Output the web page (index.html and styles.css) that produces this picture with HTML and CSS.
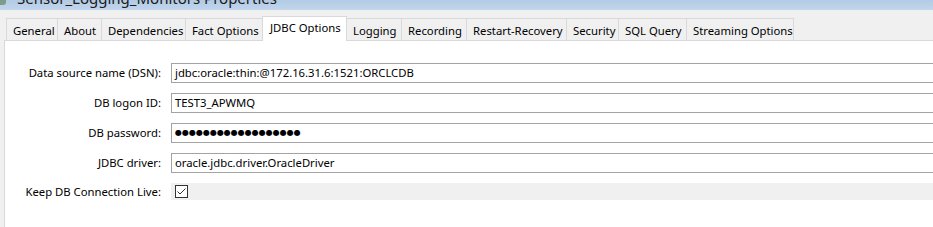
FILE: index.html
```html
<!DOCTYPE html>
<html>
<head>
<meta charset="utf-8">
<link rel="stylesheet" href="styles.css">
</head>
<body>
<div class="titlebar">
  <span class="ticon"></span>
  <span class="ttext">Sensor_Logging_Monitors Properties</span>
</div>
<div class="tabs">
  <div class="tab t1">General</div>
  <div class="tab t2">About</div>
  <div class="tab t3">Dependencies</div>
  <div class="tab t4">Fact Options</div>
  <div class="tab t5 sel">JDBC Options</div>
  <div class="tab t6">Logging</div>
  <div class="tab t7">Recording</div>
  <div class="tab t8">Restart-Recovery</div>
  <div class="tab t9">Security</div>
  <div class="tab t10">SQL Query</div>
  <div class="tab t11">Streaming Options</div>
</div>
<div class="panel">
  <div class="form">
    <div class="lbl">Data source name (DSN):</div>
    <div class="field">jdbc:oracle:thin:@172.16.31.6:1521:ORCLCDB</div>
    <div class="lbl">DB logon ID:</div>
    <div class="field">TEST3_APWMQ</div>
    <div class="lbl">DB password:</div>
    <div class="field"><span class="dots">●●●●●●●●●●●●●●●●●●</span></div>
    <div class="lbl">JDBC driver:</div>
    <div class="field">oracle.jdbc.driver.OracleDriver</div>
    <div class="lbl lbl-sm">Keep DB Connection Live:</div>
    <div class="band">
      <span class="check">
        <svg width="11" height="11" viewBox="0 0 11 11"><path d="M1.5 5.5 L4 8 L9.5 2.5" fill="none" stroke="#333" stroke-width="1"/></svg>
      </span>
    </div>
  </div>
</div>
</body>
</html>
```

FILE: styles.css
```css
html, body {
  margin: 0;
  padding: 0;
  overflow: hidden;
}
body {
  width: 933px;
  height: 227px;
  background: #f0f0f0;
  font-family: "Noto Sans", "Open Sans", sans-serif;
  font-size: 11.3px;
  color: #000;
}
.titlebar {
  height: 10px;
  overflow: hidden;
  background: linear-gradient(#b2cae5, #c2d6ec);
  display: flex;
  align-items: flex-start;
}
.ticon {
  width: 6px;
  height: 5px;
  background: #7f9a86;
  border-radius: 0 0 3px 0;
  flex: none;
}
.ttext {
  margin-left: 11px;
  margin-top: -11px;
  font-size: 15px;
  line-height: 18px;
  color: #1a1a1a;
  white-space: nowrap;
}
.tabs {
  display: flex;
  align-items: flex-end;
  height: 24px;
  margin-top: 6px;
  padding-left: 6px;
}
.tab {
  box-sizing: border-box;
  height: 22px;
  border: 1px solid #d9d9d9;
  border-bottom: none;
  margin-left: -1px;
  background: #f0f0f0;
  padding-left: 6px;
  padding-top: 1px;
  line-height: 21px;
  white-space: nowrap;
  overflow: hidden;
}
.tab.sel {
  background: #fff;
  line-height: 22px;
  padding-top: 0;
  position: relative;
  z-index: 1;
  margin-bottom: -1px;
  height: 25px;
  padding-left: 7px;
}
.t1 { width: 52px; margin-left: 0; }
.t2 { width: 45px; }
.t3 { width: 85px; }
.t4 { width: 78px; }
.t5 { width: 85px; }
.t6 { width: 56px; }
.t7 { width: 66px; }
.t8 { width: 101px; }
.t9 { width: 53px; }
.t10 { width: 69px; }
.t11 { width: 108px; }
.panel {
  box-sizing: border-box;
  margin-left: 4px;
  border-left: 1px solid #d9d9d9;
  border-top: 1px solid #d9d9d9;
  background: #fff;
  height: 187px;
  padding-top: 22px;
}
.form {
  display: grid;
  grid-template-columns: 156px 800px;
  column-gap: 10px;
  row-gap: 10px;
  grid-auto-rows: 20px;
}
.form .lbl-sm, .form .band { height: 17px; }
.lbl {
  text-align: right;
  line-height: 20px;
  white-space: nowrap;
}
.lbl-sm { line-height: 17px; }
.field {
  box-sizing: border-box;
  height: 20px;
  border: 1px solid #a3a3a3;
  padding-left: 3px;
  line-height: 18px;
  white-space: nowrap;
}
.dots {
  font-family: "DejaVu Sans", sans-serif;
  font-size: 8px;
  letter-spacing: 0;
  vertical-align: top;
  line-height: 18px;
}
.band {
  background: #f0f0f0;
  display: flex;
  align-items: center;
  padding-left: 4px;
}
.check {
  box-sizing: border-box;
  width: 13px;
  height: 13px;
  border: 1px solid #333;
  background: #fff;
  display: flex;
}
```
